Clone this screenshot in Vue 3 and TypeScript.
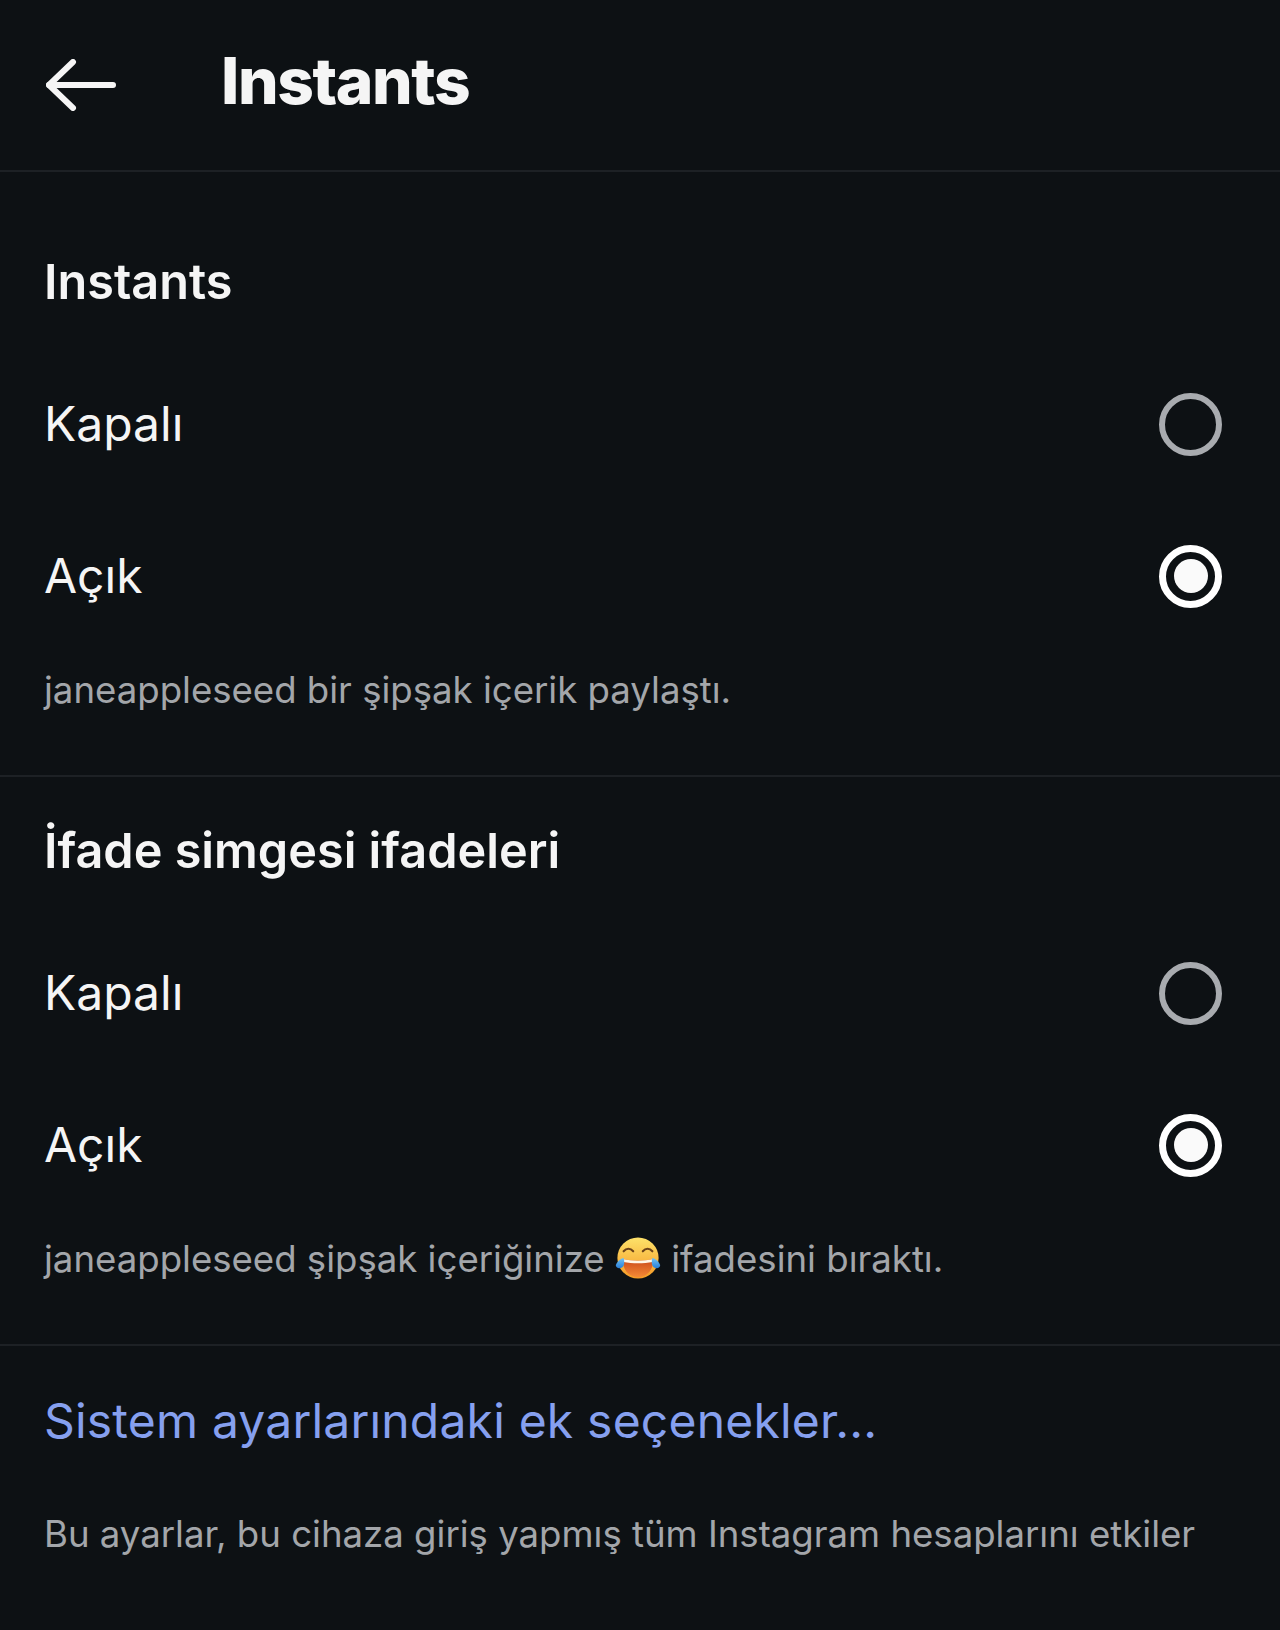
<script setup lang="ts">
interface Option { label: string; selected: boolean }
const options: Option[] = [
  { label: 'Kapalı', selected: false },
  { label: 'Açık', selected: true },
]
</script>

<template>
  <main class="page">
    <header class="topbar">
      <svg class="back" viewBox="0 0 70 52" width="70" height="52" fill="none" stroke="#f5f5f5" stroke-width="6" stroke-linecap="round" stroke-linejoin="round">
        <path d="M27 3 3 26l24 23" />
        <path d="M3 26h64" />
      </svg>
      <h1 class="title">Instants</h1>
    </header>

    <section class="group first">
      <h2 class="heading">Instants</h2>
      <div v-for="o in options" :key="o.label" class="row">
        <span class="label">{{ o.label }}</span>
        <span class="radio" :class="{ on: o.selected }"></span>
      </div>
      <p class="hint">janeappleseed bir şipşak içerik paylaştı.</p>
    </section>

    <section class="group">
      <h2 class="heading">İfade simgesi ifadeleri</h2>
      <div v-for="o in options" :key="o.label" class="row">
        <span class="label">{{ o.label }}</span>
        <span class="radio" :class="{ on: o.selected }"></span>
      </div>
      <p class="hint">
        janeappleseed şipşak içeriğinize
        <svg class="emoji" viewBox="0 0 48 48" width="46" height="46">
          <defs>
            <linearGradient id="face" x1="0" y1="0" x2="0" y2="1">
              <stop offset="0" stop-color="#fde26a" />
              <stop offset="1" stop-color="#f59a25" />
            </linearGradient>
            <linearGradient id="tear" x1="0" y1="0" x2="0" y2="1">
              <stop offset="0" stop-color="#6fc3f5" />
              <stop offset="1" stop-color="#2a7fd8" />
            </linearGradient>
            <linearGradient id="mouth" x1="0" y1="0" x2="0" y2="1">
              <stop offset="0" stop-color="#c9491c" />
              <stop offset="1" stop-color="#f58a35" />
            </linearGradient>
          </defs>
          <circle cx="24" cy="24" r="21.500" fill="url(#face)" />
          <path d="M9 17c3-3.500 7-3.500 10 0M29 17c3-3.500 7-3.500 10 0" fill="none" stroke="#6b4218" stroke-width="2.200" stroke-linecap="round" />
          <path d="M8 25c10.500 2.400 21.500 2.400 32 0 0 12-7 19-16 19S8 37 8 25z" fill="url(#mouth)" />
          <path d="M8 25c10.500 2.400 21.500 2.400 32 0l-.6 3.200c-9.800 1.800-21 1.800-30.800 0z" fill="#fff7e8" />
          <path d="M1 31c1.500-3.500 5-6.500 8-7 1 3.500 1 7-1 9.500-2.500 2.500-8 .500-7-2.500z" fill="url(#tear)" />
          <path d="M47 31c-1.500-3.500-5-6.500-8-7-1 3.500-1 7 1 9.500 2.500 2.500 8 .500 7-2.500z" fill="url(#tear)" />
        </svg>
        ifadesini bıraktı.
      </p>
    </section>

    <section class="footer">
      <a class="link">Sistem ayarlarındaki ek seçenekler...</a>
      <p class="hint">Bu ayarlar, bu cihaza giriş yapmış tüm Instagram hesaplarını etkiler</p>
    </section>
  </main>
</template>

<style>
html, body { margin: 0; background: #0d1114; }
</style>

<style scoped>
.page {
  width: 1280px;
  height: 1630px;
  background: #0d1114;
  color: #f5f5f5;
  font-family: Inter, "Noto Sans", sans-serif;
  overflow: hidden;
}
.topbar {
  height: 170px;
  padding-left: 46px;
  display: flex;
  align-items: center;
  gap: 105px;
  border-bottom: 2px solid #1d2125;
}
.back { display: block; flex: none; }
.title {
  margin: 0 0 8px;
  font-size: 64px;
  line-height: 72px;
  font-weight: 800;
  letter-spacing: -1.4px;
}
.group {
  border-bottom: 2px solid #1d2125;
  padding: 44px 0 60px;
}
.group.first { padding-top: 80px; }
.heading {
  margin: 0 44px 36px;
  font-size: 48.600px;
  line-height: 60px;
  font-weight: 600;
}
.row {
  height: 152px;
  padding: 0 58px 0 44px;
  display: flex;
  align-items: center;
  justify-content: space-between;
}
.label { font-size: 48px; line-height: 60px; }
.radio {
  width: 63px;
  height: 63px;
  box-sizing: border-box;
  border: 6px solid #a8abaf;
  border-radius: 50%;
  display: flex;
  align-items: center;
  justify-content: center;
}
.radio.on { border: 7px solid #fff; }
.radio.on::after {
  content: "";
  width: 34px;
  height: 34px;
  border-radius: 50%;
  background: #fafafa;
}
.hint {
  margin: 13px 44px 0;
  font-size: 36.600px;
  line-height: 50px;
  color: #a3a6aa;
  white-space: nowrap;
}
.emoji { vertical-align: -9px; }
.footer { padding-top: 45px; }
.link {
  display: block;
  margin: 0 44px;
  font-size: 48px;
  line-height: 60px;
  letter-spacing: 0.2px;
  color: #86a0ef;
}
.footer .hint { margin-top: 58px; }
</style>
